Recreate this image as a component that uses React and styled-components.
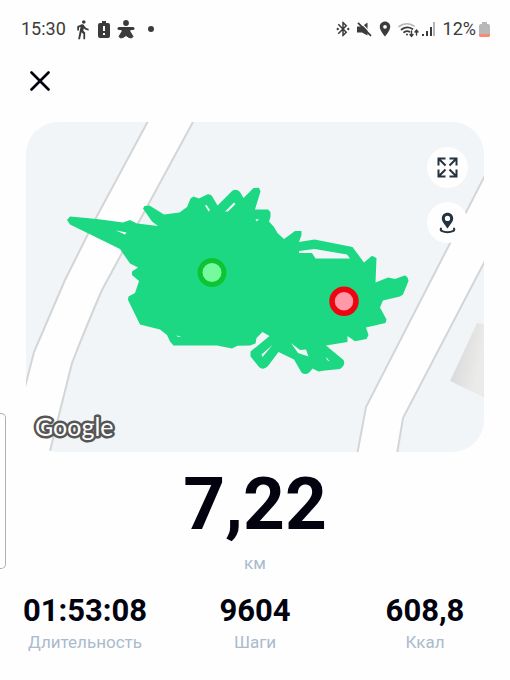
import React from 'react'
import styled, { createGlobalStyle } from 'styled-components'
import { MdDirectionsWalk, MdBluetoothConnected, MdLocationOn } from 'react-icons/md'


const stats = [
    { label: 'Длительность', value: '01:53:08' },
    { label: 'Шаги', value: '9604' },
    { label: 'Ккал', value: '608,8' },
]

const StatusBar = () => {
    return (
        <Status>
            <div className='status__side'>
                <time>15:30</time>
                <div className='status__apps'>
                    <Cell><MdDirectionsWalk size={21} /></Cell>
                    <Cell>
                        <svg width="12" height="17" viewBox="0 0 12 17">
                            <path fill="currentColor" fillRule="evenodd" d="M4 0h4v2h2q2 0 2 2v11q0 2-2 2H2q-2 0-2-2V4q0-2 2-2h2zM5 5v5h2V5zM5 12v2h2v-2z" />
                        </svg>
                    </Cell>
                    <Cell>
                        <svg width="18" height="19" viewBox="0 0 18 19" fill="currentColor">
                            <circle cx="9" cy="3" r="2.9" />
                            <path stroke="currentColor" strokeWidth="3" strokeLinecap="round" d="M2 8.500h14" />
                            <path stroke="currentColor" strokeLinejoin="round" d="M5 8h8v3.500l3 5-1.500 1.500-2.500-.5L9 15.500 6 17.500 3.500 18 2 16.500l3-5z" />
                        </svg>
                    </Cell>
                    <Cell $wide>
                        <svg width="6" height="6"><circle cx="3" cy="3" r="3" fill="currentColor" /></svg>
                    </Cell>
                </div>
            </div>
            <div className='status__side'>
                <Cell><MdBluetoothConnected size={18} /></Cell>
                <Cell>
                    <svg width="15" height="15" viewBox="0 0 15 15">
                        <path fill="currentColor" d="M0 4.500h5L10.500.5v13L5 10.500H0z" />
                        <path stroke="#fefefe" strokeWidth="1.200" d="M3 0l12 12" />
                        <path stroke="currentColor" strokeWidth="1.800" d="M1 .8l13 13" />
                    </svg>
                </Cell>
                <Cell><MdLocationOn size={18} /></Cell>
                <Cell $wide>
                    <svg width="22" height="17" viewBox="0 0 22 17" fill="none" stroke="currentColor" strokeLinecap="round">
                        <path d="M1 5.500Q8 .2 16 5" stroke="#b5b5b5" strokeWidth="1.6" />
                        <path d="M3.500 8.500Q9 4.500 14.500 8" strokeWidth="1.8" />
                        <path d="M6 11.300q3-2 5.500-.5" strokeWidth="1.8" />
                        <circle cx="9" cy="13.500" r="1" fill="currentColor" stroke="none" />
                        <path d="M13.500 10v5M12 13.500l1.500 1.800 1.500-1.800M18.500 14V9.300M17 11l1.500-1.800L20 11" strokeWidth="1.400" />
                    </svg>
                </Cell>
                <Cell>
                    <svg width="20" height="15" viewBox="0 0 20 15" fill="currentColor">
                        <path d="M0 12h2v2H0zM4 9h2v5H4zM8 5h2v9H8z" />
                        <path d="M11 0h2v14h-2z" fill="#b5b5b5" />
                    </svg>
                </Cell>
                <span>12%</span>
                <svg className='status__battery' width="11" height="15" viewBox="0 0 11 15">
                    <path fill="#b7b9b8" d="M3 0h5v2h1q2 0 2 2v8H0V4q0-2 2-2h1z" />
                    <path fill="#f98a71" d="M0 12h11v1q0 2-1 2H1q-1 0-1-2z" />
                </svg>
            </div>
        </Status>
    )
}

const RouteMap = () => {
    return (
        <MapCard>
            <svg className='map__canvas' viewBox="26 122 458 330" preserveAspectRatio="xMidYMid slice" role="img" aria-label="Маршрут">
                <defs>
                    <linearGradient id="house" x1="0" y1="0.3" x2="1" y2="0.7">
                        <stop offset="0.2" stopColor="#dcdcdc" />
                        <stop offset="0.7" stopColor="#ebebea" />
                    </linearGradient>
                </defs>
                <g fill="#fefefe" stroke="#d3d5d6" strokeWidth="2">
                    <path d="M154 110L97 216 65 280 34 352 14 430V470H45L50 451 72 363Q88 322 102 290L148 205 200 109z" />
                    <path d="M496 154L426 290 366 407 355 466H395L403 418 475 280 496 240z" />
                </g>
                <path d="M477 323l14 2v76l-41-20z" fill="url(#house)" />
                <path
                    fill="#1dd883"
                    fillRule="evenodd"
                    d="M67 220L70 216.500 97 219 123 222.500 130 220 137 223.500 158 226 152 221.500 143 208.500 144.500 206 149.500 205.500 164 214.500 179.500 212.500 187 207 190.500 198.500 193.500 196.500 199 198.500 207 194.500Q210 193.500 212 196L217.500 205.500 232 191Q236 188 240 192L243.500 198 253.500 188 259 187.800 260.500 191.500 255 209.500 268 209.500 270.500 212 270.500 217 269 221.500 274 227 277.500 233 284 239 295 231 301.500 231 301.500 235 299 242 314.500 239.500 352.500 247 364 262.500 372 255.800 376.500 258 375.500 282.500 388 277.500 395 279 404.500 275.500Q408 276 408.500 281L403 294.500 400 296.500 383 300.500 380 307.500 386.500 319.500 385.500 323 366 327.500 368.500 335 366.500 339 355 341.300 347.500 336V342L326 345.500 343.500 360Q346 365 340 369L325 370.500 318.500 371.500 312.500 368.500Q307 377 301.500 372.500L294 359.500 278.500 352 268 366Q263 371 259 367L250.500 356.500 250.500 351.500 269.500 336 262.500 332 256.500 338 255.500 343.500 250 345.500 237.500 345.800 232 348.500 217 345.500 173.500 345.500 170 341.500 167 335 160 329.500 140 324.500 128 300 128.500 296.500 135 293 139 281 132 275 132 271.500 138 267.500 130 263.500 120 249 70 224.500z
                        M116 230.500l9 4 1.500-2z
                        M205 205.500l3.500 6 1.500-1.500-3.500-5z
                        M234 202.500L225 211.500h3l7.500-7.500z
                        M255.500 219l1 2.500 2.500-2z
                        M299 251L314.500 249 347 254.500 350 258.500H315.500L312 253H299z
                        M291 343L298 353 308.500 356.500 306 349.500 300 350z
                        M261.500 354.500l1 2.500 10-12z
                        M326 357l4 4.500-3-1.500z
                        M176.500 335.500l5 1-3.500.5z"
                />
                <circle cx="212" cy="272.500" r="12" fill="#75fa9d" stroke="#0dc432" strokeWidth="5" />
                <circle cx="344" cy="301.300" r="12" fill="#ff98a7" stroke="#ee0511" strokeWidth="5.500" />
            </svg>
            <MapControls>
                <RoundButton aria-label="Развернуть карту">
                    <svg width="21" height="21" viewBox="0 0 21 21" fill="none" stroke="currentColor" strokeWidth="2">
                        <path d="M1.500 8.500v-7h7M1.500 1.500l7 7M12.500 1.500h7v7M19.500 1.500l-7 7M1.500 12.500v7h7M1.500 19.500l7-7M12.500 19.500h7v-7M19.500 19.500l-7-7" />
                    </svg>
                </RoundButton>
                <RoundButton aria-label="Показать точку">
                    <svg width="17" height="22" viewBox="0 0 17 22">
                        <path fill="currentColor" fillRule="evenodd" d="M8.500.8c3.300 0 5.700 2.400 5.700 5.600 0 3.400-3.200 6-5.700 10.200C6 12.400 2.800 9.800 2.800 6.400 2.800 3.200 5.200.8 8.500.8zM8.500 3.800a2.600 2.600 0 1 0 0 5.200 2.600 2.600 0 0 0 0-5.200z" />
                        <path fill="none" stroke="currentColor" strokeWidth="2" strokeLinecap="round" d="M2 16.500C.5 18.800 4.500 20.200 8.500 20.200s8-1.400 6.500-3.700" />
                    </svg>
                </RoundButton>
            </MapControls>
            <Attribution width="110" height="44" viewBox="0 0 110 44">
                <text x="9" y="28">Google</text>
            </Attribution>
        </MapCard>
    )
}

const App = () => {
    return (
        <Screen>
            <GlobalStyle />
            <StatusBar />
            <Header>
                <CloseButton aria-label="Закрыть">
                    <svg width="20" height="20" viewBox="0 0 20 20" fill="none" stroke="currentColor" strokeWidth="2.600" strokeLinecap="round">
                        <path d="M1.500 1.500l17 17M18.500 1.500l-17 17" />
                    </svg>
                </CloseButton>
            </Header>
            <RouteMap />
            <Distance>
                <strong>7,22</strong>
                <span>км</span>
            </Distance>
            <Stats>
                {stats.map(({ label, value }) => (
                    <Stat key={label}>
                        <dt>{label}</dt>
                        <dd>{value}</dd>
                    </Stat>
                ))}
            </Stats>
            <EdgeHandle />
        </Screen>
    )
}

export default App

const GlobalStyle = createGlobalStyle`
    * {
        box-sizing: border-box;
    }

    body {
        margin: 0;
        background: #fefefe;
        font-family: Roboto, "Liberation Sans", sans-serif;
    }
`

const Screen = styled.main`
    position: relative;
    display: flex;
    flex-direction: column;
    min-height: 100vh;
    color: #02030f;
`

const Status = styled.header`
    display: flex;
    justify-content: space-between;
    padding: 18px 20px 0 21px;
    color: #3a3b3b;
    font-size: 18px;
    line-height: 22px;

    .status__side,
    .status__apps {
        display: flex;
        align-items: center;
    }

    .status__apps {
        gap: 1px;
        margin-left: 6px;
    }

    .status__battery {
        margin-left: 3px;
    }
`

const Cell = styled.span`
    display: flex;
    align-items: center;
    justify-content: center;
    width: ${({ $wide }) => ($wide ? '26px' : '21px')};
    height: 22px;
`

const Header = styled.nav`
    display: flex;
    padding: 26px 25px;
`

const CloseButton = styled.button`
    display: flex;
    align-items: center;
    justify-content: center;
    width: 30px;
    height: 30px;
    padding: 0;
    border: none;
    background: none;
    color: inherit;
    cursor: pointer;
`

const MapCard = styled.section`
    position: relative;
    height: 330px;
    margin: 0 26px;
    border-radius: 32px;
    background: #f1f5f7;
    overflow: hidden;

    .map__canvas {
        display: block;
        width: 100%;
        height: 100%;
    }
`

const MapControls = styled.div`
    position: absolute;
    top: 25px;
    right: 16px;
    display: flex;
    flex-direction: column;
    gap: 14px;
`

const RoundButton = styled.button`
    display: flex;
    align-items: center;
    justify-content: center;
    width: 41px;
    height: 41px;
    padding: 0;
    border: none;
    border-radius: 50%;
    background: #fefefe;
    color: #25323f;
    cursor: pointer;
`

const Attribution = styled.svg`
    position: absolute;
    left: 0;
    bottom: 0;

    text {
        fill: #fff;
        stroke: #555655;
        stroke-width: 5px;
        stroke-linejoin: round;
        paint-order: stroke fill;
        font-family: Lato, sans-serif;
        font-size: 25px;
    }
`

const Distance = styled.section`
    display: flex;
    flex-direction: column;
    align-items: center;
    padding-top: 16px;

    strong {
        font-size: 73px;
        font-weight: 700;
        line-height: 72px;
    }

    span {
        margin-top: 12px;
        color: #a9bbcd;
        font-size: 17px;
        line-height: 22px;
    }
`

const Stats = styled.dl`
    display: grid;
    grid-template-columns: repeat(3, 1fr);
    margin: 18px 0 0;
`

const Stat = styled.div`
    display: flex;
    flex-direction: column-reverse;
    align-items: center;

    dt {
        color: #a9bbcd;
        font-size: 17px;
        line-height: 22px;
    }

    dd {
        margin: 0 0 1px;
        font-size: 31px;
        font-weight: 700;
        line-height: 38px;
    }
`

const EdgeHandle = styled.div`
    position: absolute;
    top: 413px;
    left: 0;
    width: 6px;
    height: 156px;
    border: solid #b0b0b0 1px;
    border-left: none;
    border-radius: 0 5px 5px 0;
`
